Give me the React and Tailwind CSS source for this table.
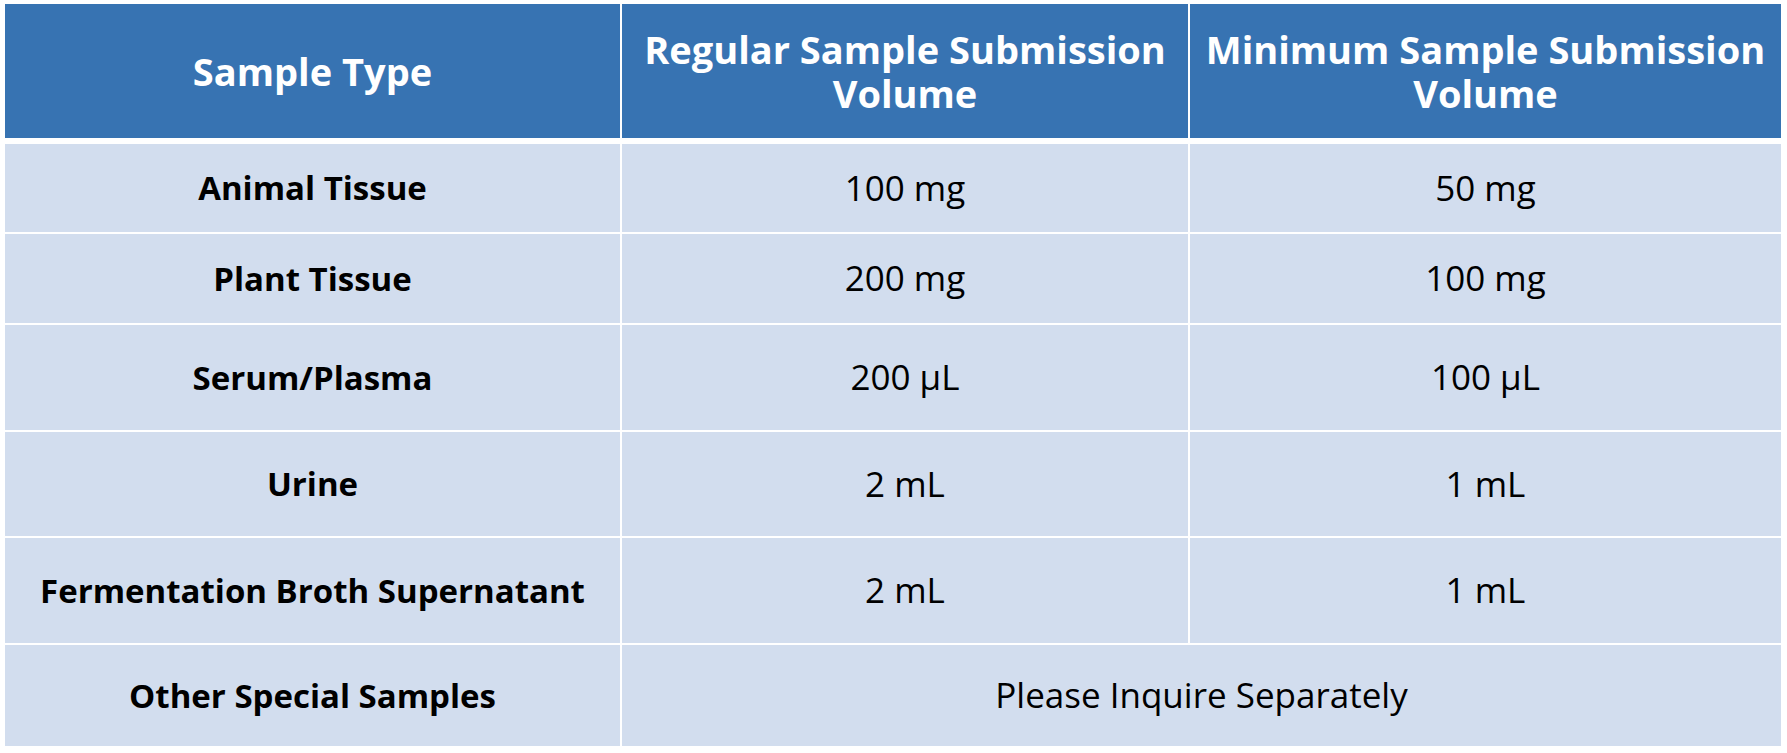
import React from "react";

const rows = [
  { type: "Animal Tissue", reg: "100 mg", min: "50 mg", h: "h-[88px]" },
  { type: "Plant Tissue", reg: "200 mg", min: "100 mg", h: "h-[89px]" },
  { type: "Serum/Plasma", reg: "200 μL", min: "100 μL", h: "h-[105px]" },
  { type: "Urine", reg: "2 mL", min: "1 mL", h: "h-[104px]" },
  { type: "Fermentation Broth Supernatant", reg: "2 mL", min: "1 mL", h: "h-[105px]" },
];

export default function App() {
  return (
    <div className="w-[1787px] h-[753px] bg-white pt-[4px] pl-[5px] font-['Open_Sans',sans-serif] text-black">
      <div className="flex flex-col w-[1776px]">
        <div className="flex gap-[2px] h-[134px] mb-[6px] text-white font-bold text-[38px] leading-[44px]">
          <div className="w-[615px] bg-[#3773b2] flex items-center justify-center text-center">Sample Type</div>
          <div className="w-[566px] bg-[#3773b2] flex items-center justify-center text-center">Regular Sample Submission<br />Volume</div>
          <div className="w-[591px] bg-[#3773b2] flex items-center justify-center text-center">Minimum Sample Submission<br />Volume</div>
        </div>
        <div className="flex flex-col gap-[2px] text-[35px]">
          {rows.map((r) => (
            <div key={r.type} className={`flex gap-[2px] ${r.h}`}>
              <div className="w-[615px] bg-[#d2ddee] flex items-center justify-center font-bold text-[33px]">{r.type}</div>
              <div className="w-[566px] bg-[#d2ddee] flex items-center justify-center">{r.reg}</div>
              <div className="w-[591px] bg-[#d2ddee] flex items-center justify-center">{r.min}</div>
            </div>
          ))}
          <div className="flex gap-[2px] h-[101px]">
            <div className="w-[615px] bg-[#d2ddee] flex items-center justify-center font-bold text-[33px]">Other Special Samples</div>
            <div className="w-[1159px] bg-[#d2ddee] flex items-center justify-center">Please Inquire Separately</div>
          </div>
        </div>
      </div>
    </div>
  );
}
